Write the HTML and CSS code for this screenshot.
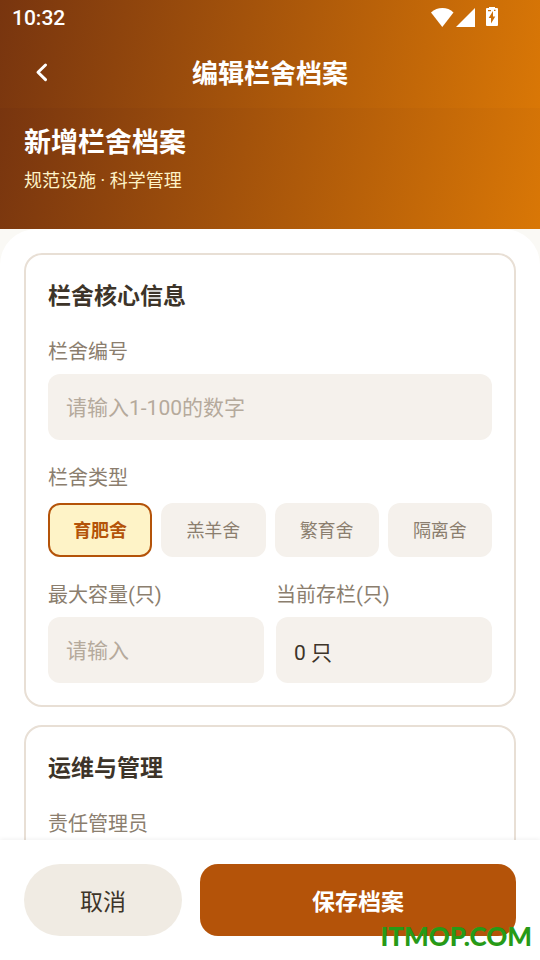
FILE: index.html
```html
<!DOCTYPE html>
<html lang="zh-CN">
<head>
<meta charset="utf-8">
<meta name="viewport" content="width=device-width, initial-scale=1">
<title>编辑栏舍档案</title>
<link rel="stylesheet" href="styles.css">
</head>
<body>
<div class="app">
  <header class="top">
    <div class="status">
      <span class="clock">10:32</span>
      <svg class="status-icons" viewBox="0 0 70 24" width="70" height="24" aria-hidden="true">
        <path fill="#fff" d="M1 6.500C7.500.6 17.500.6 23.500 6.500L12.300 21Z"/>
        <path fill="#fff" d="M45 2V21H26Z"/>
        <path fill="#fff" fill-rule="evenodd" d="M59 1h6v1h2q1 0 1 1v16q0 1-1 1H57q-1 0-1-1V3q0-1 1-1h2ZM63 5l-4.300 7h2.300v5.500l4.300-7h-2.300ZM58 4v1.200h3V4ZM64 3.800v1.200h1.500V3.800Z"/>
      </svg>
    </div>
    <div class="nav">
      <button class="back" type="button" aria-label="返回">
        <svg viewBox="0 0 24 24" width="24" height="24" aria-hidden="true"><path d="M15.500 5L8 12.300l7.500 7.300" fill="none" stroke="#fff" stroke-width="3" stroke-linecap="round" stroke-linejoin="round"/></svg>
      </button>
      <h1 class="nav-title">编辑栏舍档案</h1>
    </div>
  </header>
  <section class="hero">
    <h2 class="hero-title">新增栏舍档案</h2>
    <p class="hero-sub">规范设施 · 科学管理</p>
  </section>
  <main class="content">
    <form class="panel" id="pen-form">
      <section class="card">
        <h3 class="card-title">栏舍核心信息</h3>
        <div class="field">
          <label class="label" for="code">栏舍编号</label>
          <input class="input" id="code" type="text" placeholder="请输入1-100的数字">
        </div>
        <div class="field field-chips" role="group" aria-labelledby="type-label">
          <span class="label" id="type-label">栏舍类型</span>
          <div class="chips">
            <button class="chip chip-on" type="button" aria-pressed="true">育肥舍</button>
            <button class="chip" type="button" aria-pressed="false">羔羊舍</button>
            <button class="chip" type="button" aria-pressed="false">繁育舍</button>
            <button class="chip" type="button" aria-pressed="false">隔离舍</button>
          </div>
        </div>
        <div class="pair">
          <div class="field">
            <label class="label" for="capacity">最大容量(只)</label>
            <input class="input" id="capacity" type="text" placeholder="请输入">
          </div>
          <div class="field">
            <label class="label" for="stock">当前存栏(只)</label>
            <input class="input" id="stock" type="text" value="0 只" readonly>
          </div>
        </div>
      </section>
      <section class="card">
        <h3 class="card-title">运维与管理</h3>
        <div class="field">
          <label class="label" for="manager">责任管理员</label>
          <input class="input" id="manager" type="text">
        </div>
      </section>
    </form>
  </main>
  <footer class="actions">
    <button class="btn cancel" type="button">取消</button>
    <button class="btn save" type="submit" form="pen-form">保存档案</button>
    <span class="watermark">ITMOP.COM</span>
  </footer>
</div>
</body>
</html>
```

FILE: styles.css
```css
* {
  box-sizing: border-box;
}

body {
  margin: 0;
  font-family: Roboto, "Noto Sans CJK SC", sans-serif;
  color: #3d3429;
  background: #faf9f5;
}

h1, h2, h3, p {
  margin: 0;
}

button, input {
  font-family: inherit;
  margin: 0;
  border: 0;
}

.app {
  display: flex;
  flex-direction: column;
  height: 100vh;
}

.top {
  background: linear-gradient(101deg, #78350f, #d97706);
  color: #fff;
}

.status {
  display: flex;
  align-items: center;
  justify-content: space-between;
  height: 36px;
  padding: 0 40px 0 12px;
}

.clock {
  font-size: 21px;
  font-weight: 500;
  line-height: 24px;
}

.nav {
  display: grid;
  grid-template-columns: 48px 1fr 48px;
  align-items: center;
  height: 72px;
  padding: 0 18px;
}

.back {
  display: flex;
  align-items: center;
  justify-content: center;
  height: 48px;
  padding: 0;
  background: none;
}

.nav-title {
  padding-top: 4px;
  font-size: 26px;
  font-weight: 700;
  line-height: 36px;
  text-align: center;
}

.hero {
  padding: 15px 24px 35px;
  background: linear-gradient(103deg, #78350f, #d97706);
}

.hero-title {
  font-size: 27px;
  font-weight: 700;
  line-height: 40px;
  color: #fff;
}

.hero-sub {
  margin-top: 5px;
  font-size: 18px;
  line-height: 26px;
  color: #fef3c7;
}

.content {
  flex: 1;
  min-height: 0;
  overflow: hidden;
}

.panel {
  display: flex;
  flex-direction: column;
  gap: 18px;
  padding: 24px;
  background: #fff;
  border-radius: 36px 36px 0 0;
}

.card {
  padding: 22px;
  border: 2px solid #e8dfd5;
  border-radius: 18px;
}

.card-title {
  margin-bottom: 20px;
  font-size: 23px;
  font-weight: 700;
  line-height: 40px;
}

.field {
  display: flex;
  flex-direction: column;
  gap: 7px;
}

.field-chips {
  gap: 10px;
  margin: 23px 0;
}

.label {
  font-size: 20px;
  line-height: 30px;
  color: #8b7e6e;
}

.input {
  width: 100%;
  height: 66px;
  padding: 2px 18px 0;
  border-radius: 12px;
  background: #f5f1ec;
  font-size: 21px;
  color: #3d3429;
  outline: 0;
}

.input::placeholder {
  color: #b5aa9c;
  opacity: 1;
}

.chips {
  display: grid;
  grid-template-columns: repeat(4, 1fr);
  gap: 9px;
}

.chip {
  height: 54px;
  padding: 0 0 2px;
  border: 2px solid #f5f1ec;
  border-radius: 12px;
  background: #f5f1ec;
  font-size: 18px;
  color: #8b7e6e;
}

.chip-on {
  border-color: #b45309;
  background: #fef3c7;
  font-weight: 700;
  color: #b45309;
}

.pair {
  display: grid;
  grid-template-columns: 1fr 1fr;
  gap: 12px;
}

.actions {
  position: relative;
  display: grid;
  grid-template-columns: 1fr 2fr;
  gap: 18px;
  padding: 24px;
  background: #fff;
  box-shadow: 0 -1px 4px rgba(0, 0, 0, 0.06);
}

.btn {
  height: 72px;
  padding: 0;
  font-size: 23px;
}

.cancel {
  border-radius: 36px;
  background: #f0ebe3;
  color: #3d3429;
}

.save {
  border-radius: 18px;
  background: #b45309;
  font-weight: 700;
  color: #fff;
}

.watermark {
  position: absolute;
  right: 8px;
  bottom: 6px;
  font-family: Lato, "Open Sans", sans-serif;
  font-size: 26px;
  font-weight: 900;
  line-height: 36px;
  color: #279a17;
}
```
